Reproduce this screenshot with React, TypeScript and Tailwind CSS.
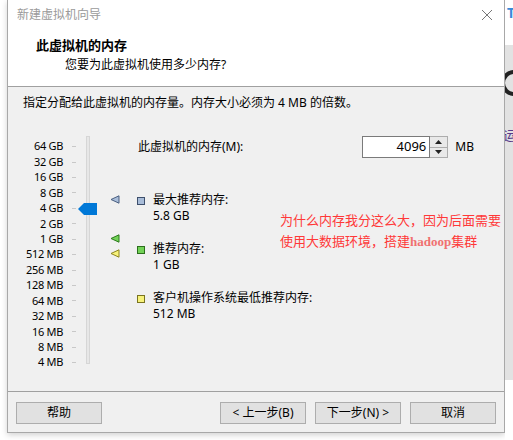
import React from 'react';

const FONT = { fontFamily: '"Noto Sans", "Noto Sans CJK SC", sans-serif' };

const scaleLabels = [
  '64 GB', '32 GB', '16 GB', '8 GB', '4 GB', '2 GB', '1 GB',
  '512 MB', '256 MB', '128 MB', '64 MB', '32 MB', '16 MB', '8 MB', '4 MB',
];

const ROW = 15.43;

const Marker: React.FC<{ fill: string; stroke: string; top: number }> = ({ fill, stroke, top }) => (
  <svg className="absolute" style={{ top }} width="10" height="9" viewBox="0 0 10 9" >
    <polygon points="1,4.5 9,0.8 9,8.2" fill={fill} stroke={stroke} strokeWidth="1" />
  </svg>
);

const LegendItem: React.FC<{ color: string; border: string; title: string; value: string }> = ({
  color,
  border,
  title,
  value,
}) => (
  <div className="flex items-start">
    <div className="mt-[5px] w-[8px] h-[8px] border" style={{ backgroundColor: color, borderColor: border }} />
    <div className="ml-[8px] leading-[16px] text-black">
      <div>{title}</div>
      <div>{value}</div>
    </div>
  </div>
);

const Button: React.FC<{ children: React.ReactNode }> = ({ children }) => (
  <button className="w-[86px] h-[22px] bg-[#e1e1e1] border border-[#adadad] text-[12px] text-black leading-none">
    {children}
  </button>
);

export default function App() {
  return (
    <div className="w-[513px] h-[440px] bg-white flex text-[12px] overflow-hidden" style={FONT}>
      <div className="w-[7px] shrink-0 bg-white" />

      {/* dialog */}
      <div className="w-[498px] h-[433px] shrink-0 flex flex-col border-x border-b border-[#a8a8a8] shadow-[0_2px_6px_rgba(0,0,0,0.18)]">
        {/* title bar */}
        <div className="h-[30px] bg-white flex items-center justify-between pl-[9px] pr-[8px]">
          <span className="text-[#9a9a9a] text-[12px]">新建虚拟机向导</span>
          <svg width="12" height="12" viewBox="0 0 12 12" className="mr-[3px]">
            <path d="M1 1 L11 11 M11 1 L1 11" stroke="#777" strokeWidth="1" />
          </svg>
        </div>

        {/* header */}
        <div className="h-[57px] bg-white border-b border-[#a0a0a0] pl-[28px] pt-[5px]">
          <div className="font-bold text-[13px] leading-[20px] text-black">此虚拟机的内存</div>
          <div className="pl-[29px] leading-[19px] text-black">您要为此虚拟机使用多少内存?</div>
        </div>

        {/* body */}
        <div className="relative flex-1 bg-[#f0f0f0] border-b border-[#a0a0a0]">
          <div className="pl-[15px] pt-[8px] leading-[16px] text-black">
            指定分配给此虚拟机的内存量。内存大小必须为 4 MB 的倍数。
          </div>

          <div className="flex mt-[28px]">
            {/* scale */}
            <div className="w-[113px] shrink-0 relative flex">
              <div className="w-[55px] flex flex-col items-end">
                {scaleLabels.map((l) => (
                  <div key={l} className="flex items-center text-[11px] tracking-[-0.3px] text-black" style={{ height: ROW }}>
                    {l}
                  </div>
                ))}
              </div>
              <div className="ml-[9px] flex flex-col">
                {scaleLabels.map((l) => (
                  <div key={l} className="flex items-center" style={{ height: ROW }}>
                    <div className="w-[4px] h-px bg-[#c8c8c8]" />
                  </div>
                ))}
              </div>

              {/* track */}
              <div className="absolute left-[78px] top-[-3px] w-[4px] h-[228px] bg-[#e7e7e7] border border-[#d6d6d6]" />
              {/* thumb */}
              <svg className="absolute left-[70px] top-[64px]" width="19" height="12" viewBox="0 0 19 12">
                <polygon points="0,6 6,0 19,0 19,12 6,12" fill="#0078d7" />
              </svg>
              {/* markers */}
              <div className="absolute left-[102px] top-0">
                <Marker fill="#a8bcd8" stroke="#4a5f80" top={56} />
                <Marker fill="#72d257" stroke="#2c7a1c" top={95} />
                <Marker fill="#f7f27a" stroke="#8c8420" top={110} />
              </div>
            </div>

            {/* right column */}
            <div className="flex-1 flex flex-col">
              <div className="flex items-center h-[22px] -mt-[3px]">
                <span className="ml-[17px] text-black">此虚拟机的内存(M):</span>
                <div className="ml-auto flex items-center">
                  <div className="w-[68px] h-[22px] bg-white border border-[#7a7a7a] flex items-center justify-end pr-[3px] text-[13px] text-black">
                    4096
                  </div>
                  <div className="w-[18px] h-[22px] border border-l-0 border-[#adadad] flex flex-col">
                    <div className="flex-1 bg-[#e9e9e9] border-b border-[#adadad] flex items-center justify-center">
                      <svg width="7" height="4" viewBox="0 0 7 4"><polygon points="0,4 3.5,0 7,4" fill="#222" /></svg>
                    </div>
                    <div className="flex-1 bg-[#e9e9e9] flex items-center justify-center">
                      <svg width="7" height="4" viewBox="0 0 7 4"><polygon points="0,0 3.5,4 7,0" fill="#222" /></svg>
                    </div>
                  </div>
                  <span className="ml-[7px] mr-[30px] text-black">MB</span>
                </div>
              </div>

              <div className="ml-[16px] mt-[34px] flex flex-col gap-[17px]">
                <LegendItem color="#a8bcd8" border="#3e4f6c" title="最大推荐内存:" value="5.8 GB" />
                <LegendItem color="#72d257" border="#2c6e1c" title="推荐内存:" value="1 GB" />
                <LegendItem color="#f7f27a" border="#7a7420" title="客户机操作系统最低推荐内存:" value="512 MB" />
              </div>
            </div>
          </div>

          {/* annotation */}
          <div
            className="absolute left-[272px] top-[122px] text-[13px] leading-[21px] text-[#ff3838]"
            style={{ fontFamily: '"Noto Sans CJK SC", sans-serif' }}
          >
            <div>为什么内存我分这么大，因为后面需要</div>
            <div>
              使用大数据环境，搭建
              <span className="font-bold text-[#f07070]" style={{ fontFamily: '"Liberation Serif", serif' }}>
                hadoop
              </span>
              集群
            </div>
          </div>
        </div>

        {/* footer */}
        <div className="h-[40px] bg-[#f0f0f0] flex items-center px-[8px] pt-[1px]">
          <Button>帮助</Button>
          <div className="ml-auto flex gap-[9px]">
            <Button>&lt; 上一步(B)</Button>
            <Button>下一步(N) &gt;</Button>
            <Button>取消</Button>
          </div>
        </div>
      </div>

      {/* window behind */}
      <div className="flex-1 flex flex-col">
        <div className="h-[45px] bg-white pl-[2px] text-[#3a8ad8] font-bold text-[14px] leading-[26px]">T</div>
        <div className="h-[335px] bg-[#e2e2e2] relative overflow-hidden">
          <div className="absolute left-[-4px] top-[25px] w-[26px] h-[26px] rounded-full border-[4px] border-[#222]" />
          <div className="absolute left-[-2px] top-[80px] text-[13px] text-[#5a3a8a]" style={{ fontFamily: '"Noto Sans CJK SC", sans-serif' }}>运</div>
        </div>
        <div className="flex-1 bg-white" />
      </div>
    </div>
  );
}
